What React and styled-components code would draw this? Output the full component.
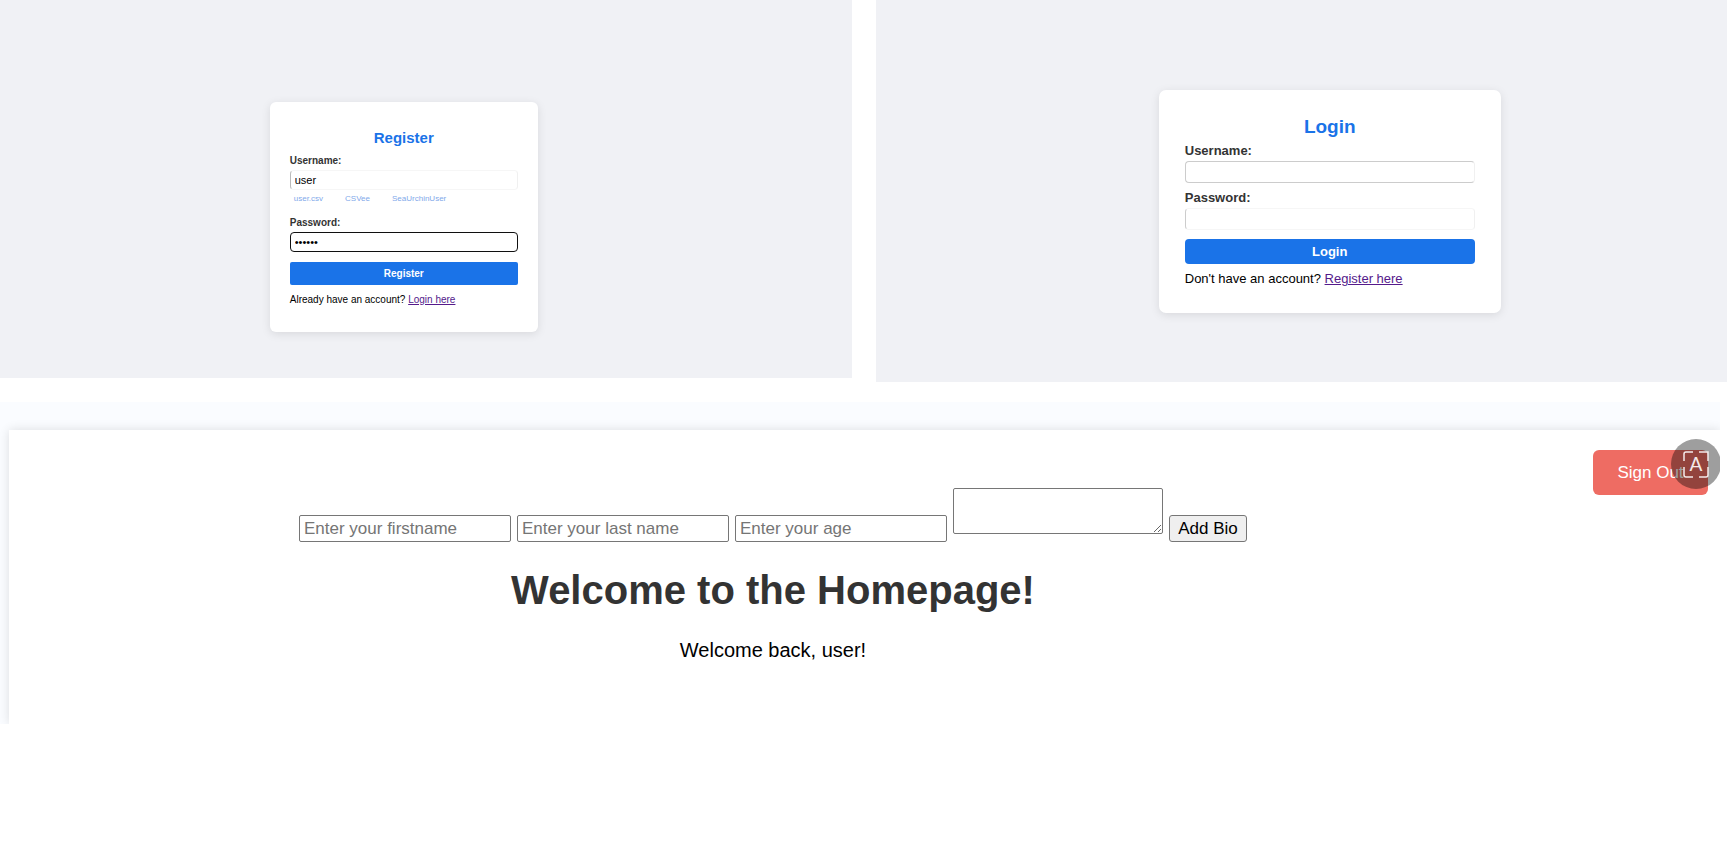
import React from "react";
import styled, { createGlobalStyle } from "styled-components";

const GlobalStyle = createGlobalStyle`
  *, *::before, *::after { box-sizing: border-box; }
  body {
    margin: 0;
    background: #fff;
    color: #000;
    font-family: "Liberation Sans", Arial, sans-serif;
  }
  input, textarea, button { font-family: inherit; }
`;

const AuthRow = styled.div`
  display: grid;
  grid-template-columns: 1fr 1fr;
  align-items: start;
  gap: 24px;
`;

const AuthPanel = styled.section`
  display: flex;
  justify-content: center;
  padding: ${(p) => p.$padding};
  background: #f0f1f5;
`;

const AuthCard = styled.form`
  display: flex;
  flex-direction: column;
  width: ${(p) => (p.$large ? 342 : 268)}px;
  padding: ${(p) => (p.$large ? "25px 26px 26px" : "26px 20px 24px")};
  border-radius: ${(p) => (p.$large ? 7 : 6)}px;
  background: #fff;
  box-shadow: 0 2px 10px rgba(0, 0, 0, 0.1);
  font-size: ${(p) => (p.$large ? 13 : 10)}px;
  line-height: 16px;
`;

const AuthTitle = styled.h2`
  margin: 0 0 ${(p) => (p.$large ? 4 : 5)}px;
  color: #1a73e8;
  font-size: ${(p) => (p.$large ? 19 : 15)}px;
  line-height: ${(p) => (p.$large ? 24 : 20)}px;
  text-align: center;
`;

const Field = styled.div`
  display: flex;
  flex-direction: column;
  gap: ${(p) => (p.$large ? 2 : 1)}px;
  margin-bottom: ${(p) => p.$after}px;
`;

const FieldLabel = styled.label`
  color: #333;
  font-weight: bold;
`;

const FieldInput = styled.input`
  width: 100%;
  height: ${(p) => (p.$large ? 22 : 20)}px;
  padding: 0 4px;
  border: 1px solid;
  border-color: ${(p) => p.$edges || "#ccc"};
  border-radius: 4px;
  outline: none;
  background: #fff;
  color: #000;
  font-size: 11px;
`;

const Suggestions = styled.div`
  display: flex;
  gap: 22px;
  padding: 2px 0 0 4px;
  color: #7fa9ea;
  font-size: 8px;
  line-height: 12px;
`;

const SubmitButton = styled.button`
  height: ${(p) => (p.$large ? 25 : 23)}px;
  margin-bottom: 7px;
  padding: 0;
  border: 0;
  border-radius: ${(p) => (p.$large ? 4 : 2)}px;
  background: #1a73e8;
  color: #fff;
  font-size: inherit;
  font-weight: bold;
`;

const AuthNote = styled.p`
  margin: 0;
`;

const AuthLink = styled.a`
  color: #551a8b;
`;

const Home = styled.main`
  position: relative;
  overflow: hidden;
  margin: 20px 7px 0 0;
  padding: 28px 0 0 9px;
  background: #fafcff;
`;

const HomeCard = styled.div`
  display: flex;
  align-items: flex-start;
  padding: 20px 12px 62px 0;
  background: #fff;
  box-shadow: 0 0 10px rgba(0, 0, 0, 0.12);
`;

const HomeContent = styled.div`
  flex: 1;
  padding: 38px 56px 0 0;
  text-align: center;
`;

const BioForm = styled.form`
  display: flex;
  justify-content: center;
  align-items: flex-end;
  gap: 6px;
`;

const BioInput = styled.input`
  width: 212px;
  height: 27px;
  padding: 1px 4px;
  border: 1px solid #767676;
  border-radius: 2px;
  font-size: 17px;
  &::placeholder { color: #757575; }
`;

const BioText = styled.textarea`
  width: 210px;
  height: 46px;
  margin-bottom: 8px;
  padding: 2px;
  border: 1px solid #767676;
  border-radius: 2px;
  font-size: 17px;
`;

const BioButton = styled.button`
  width: 78px;
  height: 27px;
  padding: 0;
  border: 1px solid #767676;
  border-radius: 3px;
  background: #efefef;
  color: #000;
  font-size: 17px;
`;

const Headline = styled.h1`
  margin: 25px 0;
  color: #333;
  font-size: 40px;
  line-height: 46px;
`;

const Greeting = styled.p`
  margin: 0;
  font-size: 20px;
  line-height: 24px;
`;

const SignOutButton = styled.button`
  width: 115px;
  height: 45px;
  padding: 0;
  border: 0;
  border-radius: 6px;
  background: #ee6c63;
  color: #fff;
  font-size: 17px;
`;

const ScanBubble = styled.button`
  position: absolute;
  top: 37px;
  right: -1px;
  width: 50px;
  height: 50px;
  padding: 0;
  border: 0;
  border-radius: 50%;
  background: rgba(0, 0, 0, 0.38);
  svg { display: block; }
  text {
    fill: #f4eaea;
    font: 400 19px Lato, sans-serif;
    text-anchor: middle;
  }
`;

function ScanIcon() {
  return (
    <svg width="50" height="50" viewBox="0 0 50 50" aria-hidden="true">
      <path
        d="M22 13H15a2 2 0 0 0-2 2V22M28 13h9V22M13 28v8a2 2 0 0 0 2 2h7M28 38h7a2 2 0 0 0 2-2V28"
        fill="none"
        stroke="#f4eaea"
        strokeWidth="1.5"
      />
      <text x="25" y="32">A</text>
    </svg>
  );
}

export default function App() {
  return (
    <>
      <GlobalStyle />
      <AuthRow>
        <AuthPanel $padding="102px 44px 46px 0">
          <AuthCard>
            <AuthTitle>Register</AuthTitle>
            <Field $after={10}>
              <FieldLabel htmlFor="reg-user">Username:</FieldLabel>
              <FieldInput id="reg-user" defaultValue="user" $edges="#f6f6f6 #f0f0f0 #f6f6f6 #bbb" />
              <Suggestions>
                <span>user.csv</span>
                <span>CSVee</span>
                <span>SeaUrchinUser</span>
              </Suggestions>
            </Field>
            <Field $after={10}>
              <FieldLabel htmlFor="reg-pass">Password:</FieldLabel>
              <FieldInput id="reg-pass" type="password" defaultValue="secret" $edges="#101010" />
            </Field>
            <SubmitButton type="button">Register</SubmitButton>
            <AuthNote>
              Already have an account? <AuthLink href="#login">Login here</AuthLink>
            </AuthNote>
          </AuthCard>
        </AuthPanel>
        <AuthPanel $padding="90px 0 69px 57px">
          <AuthCard $large>
            <AuthTitle $large>Login</AuthTitle>
            <Field $large $after={7}>
              <FieldLabel htmlFor="login-user">Username:</FieldLabel>
              <FieldInput id="login-user" $large $edges="#ccc #f0f0f0 #ccc #ccc" />
            </Field>
            <Field $large $after={9}>
              <FieldLabel htmlFor="login-pass">Password:</FieldLabel>
              <FieldInput id="login-pass" type="password" $large $edges="#f6f6f6 #f0f0f0 #f6f6f6 #ccc" />
            </Field>
            <SubmitButton type="button" $large>Login</SubmitButton>
            <AuthNote>
              Don't have an account? <AuthLink href="#register">Register here</AuthLink>
            </AuthNote>
          </AuthCard>
        </AuthPanel>
      </AuthRow>
      <Home>
        <HomeCard>
          <HomeContent>
            <BioForm>
              <BioInput placeholder="Enter your firstname" aria-label="First name" />
              <BioInput placeholder="Enter your last name" aria-label="Last name" />
              <BioInput placeholder="Enter your age" aria-label="Age" />
              <BioText aria-label="Bio" />
              <BioButton type="button">Add Bio</BioButton>
            </BioForm>
            <Headline>Welcome to the Homepage!</Headline>
            <Greeting>Welcome back, user!</Greeting>
          </HomeContent>
          <SignOutButton type="button">Sign Out</SignOutButton>
        </HomeCard>
        <ScanBubble type="button" aria-label="Scan text">
          <ScanIcon />
        </ScanBubble>
      </Home>
    </>
  );
}
